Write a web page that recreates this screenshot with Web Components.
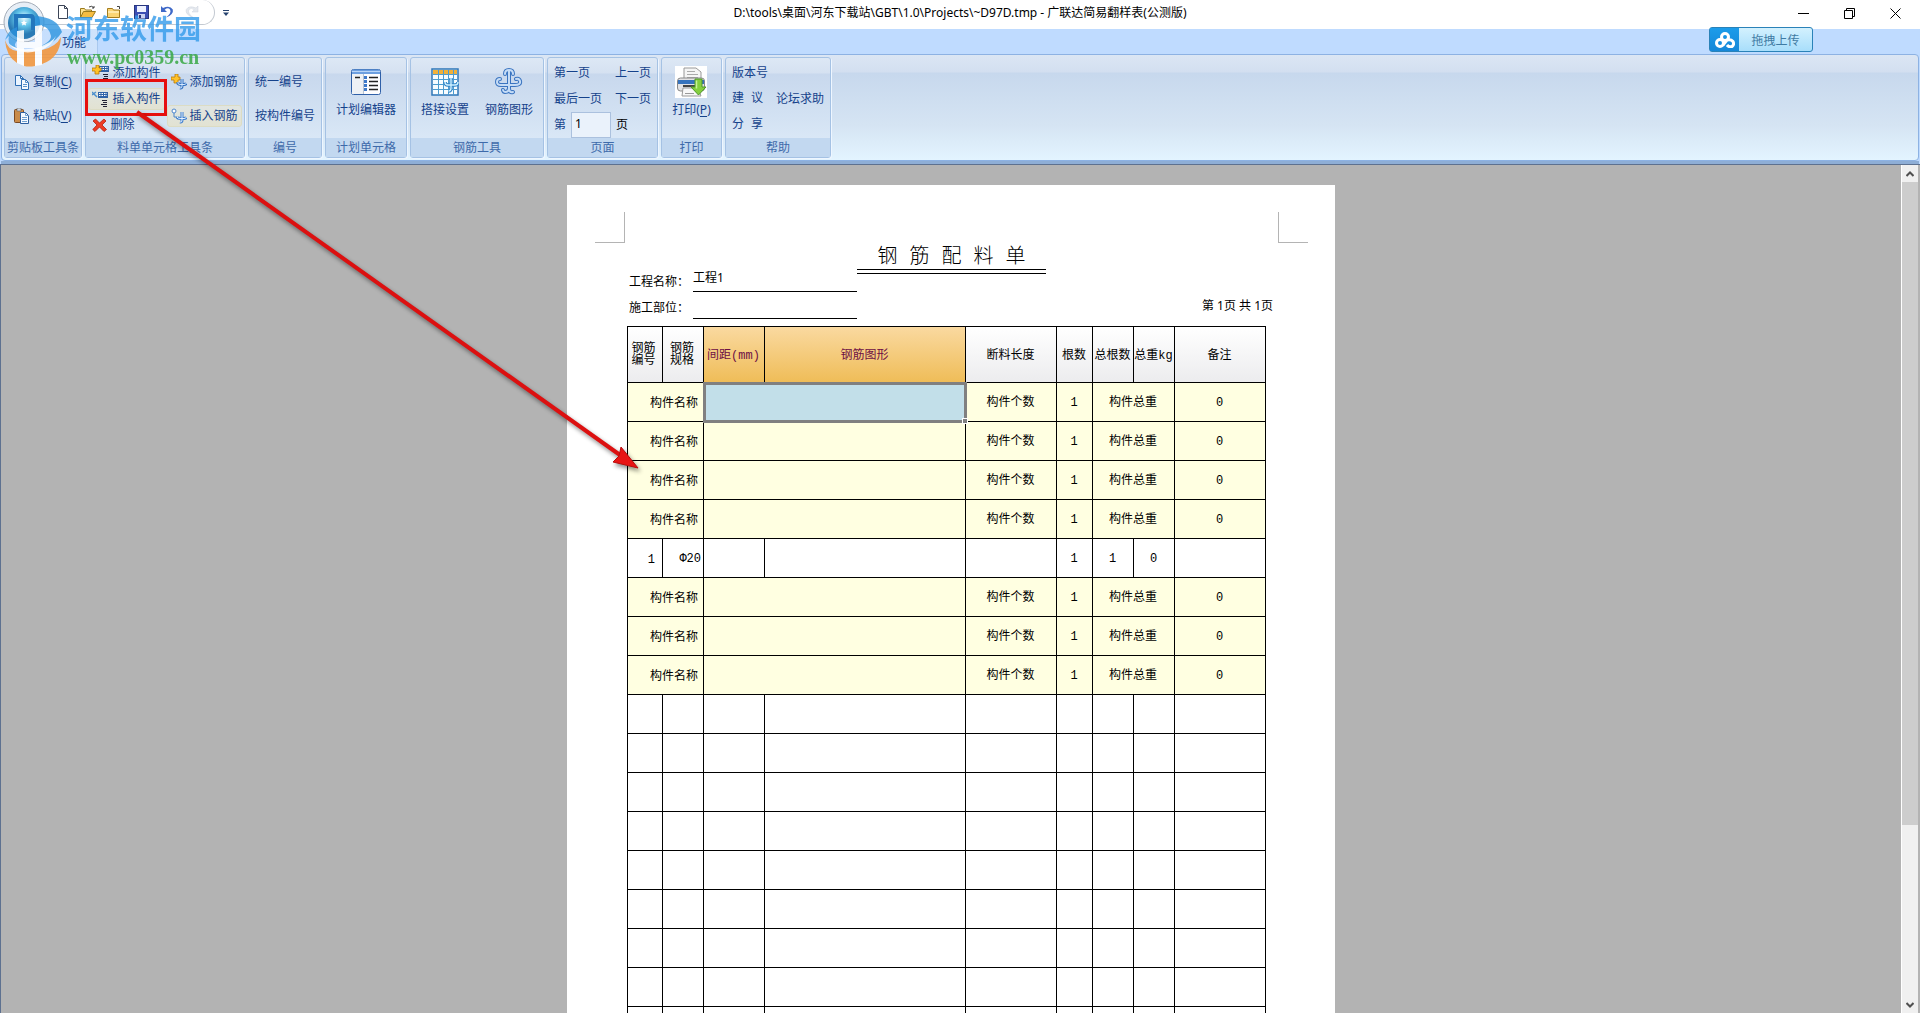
<!DOCTYPE html>
<html lang="zh-CN">
<head>
<meta charset="utf-8">
<title>广联达简易翻样表</title>
<style>
  html, body { height: 100%; }
  body { margin: 0; overflow: hidden; font-family: "Noto Sans", "Noto Sans CJK SC", sans-serif; font-size: 12px; }
</style>
</head>
<body>
<rebar-app></rebar-app>
<script>
const ICONS = {
  copy: [16, 16, '<path d="M1.5 1.500h5l3 3v7h-8z" fill="#eaf4ff" stroke="#2f6fb5"/><path d="M6.500 1.500v3h3" fill="none" stroke="#2f6fb5"/><path d="M7.500 5.500h4l3 3v7h-7z" fill="#f5faff" stroke="#2f6fb5"/><path d="M11.500 5.500v3h3M9 10.500h4M9 12.500h4" fill="none" stroke="#5b93cd"/>'],
  paste: [16, 16, '<rect x=".5" y="1.500" width="9" height="13" rx="1" fill="#c98b4a" stroke="#7b4a23"/><rect x="3" y="0" width="4" height="3" fill="#cfd6df" stroke="#666" stroke-width=".6"/><path d="M6.500 4.500h5l3 3v8h-8z" fill="#f5faff" stroke="#2f5f9f"/><path d="M11.500 4.500v3h3M8 9.500h5M8 11.500h5M8 13.500h5" fill="none" stroke="#6f9fd0"/>'],
  addPart: [17, 16, '<rect x="7" y="1" width="10" height="6" fill="#2f63a8"/><path d="M8 2.500h8M8 4.500h8" stroke="#fff" stroke-dasharray="1.500 1"/><path d="M11 9.500h5M12 11.500h4M11 13.500h5M13 15.500h3" stroke="#223"/><path d="M4 0h3v3h2v3H7v3H3V6H0V3h4z" fill="#ffc229" stroke="#b87a08" stroke-width=".8"/>'],
  insPart: [17, 16, '<rect x="6" y="1" width="10" height="6" fill="#2f63a8"/><path d="M7 2.500h8M7 4.500h8" stroke="#fff" stroke-dasharray="1.500 1"/><path d="M10 9.500h5M11 11.500h4M9 13.500h6M11 15.500h4" stroke="#223"/><path d="M0 1l5 5M0 4l4-3" stroke="#4b8fcd" stroke-width="1.500" fill="none"/>'],
  del: [15, 14, '<path d="M1 3l2.500-2L7.500 5 12 1l2 2-4 4 4.500 4.500-2.500 2L7.500 9 3 13.500.8 11.500 5 7z" fill="#ee3b24" stroke="#b3200f" stroke-width=".8"/>'],
  addBar: [16, 16, '<path d="M4 0h3v3h2v3H7v3H3V6H0V3h4z" fill="#ffc229" stroke="#b87a08" stroke-width=".8"/><path d="M11 5v7q0 2.500-2 2M7 8v1.500q.5 1 3 1h3q2 0 2.500-1.500" fill="none" stroke="#2f6fc0" stroke-width="3"/><path d="M11 5v7q0 2.500-2 2M7 8v1.500q.5 1 3 1h3q2 0 2.500-1.500" fill="none" stroke="#d5e9ff"/>'],
  insBar: [16, 16, '<circle cx="3" cy="3" r="2" fill="#fff" stroke="#4b86cc"/><path d="M3 5v4h3" fill="none" stroke="#4b86cc"/><path d="M11 4v8q0 2.500-2 2M6 9q.5 1.500 4 1.500h3q2 0 2.500-1.500" fill="none" stroke="#3f7fce" stroke-width="3"/><path d="M11 4v8q0 2.500-2 2M6 9q.5 1.500 4 1.500h3q2 0 2.500-1.500" fill="none" stroke="#e5f1ff"/>'],
  planner: [32, 28, '<rect x="1.500" y="1.500" width="29" height="25" rx="2" fill="#fdfdff" stroke="#2f60a8"/><path d="M2 3q0-1.500 1.500-1.500h25q1.500 0 1.500 1.500v3H2z" fill="#6d9fe0"/><path d="M2 3.500h28" stroke="#b9d5f7"/><rect x="2" y="6" width="11" height="20" fill="#eef1f5"/><path d="M13.500 6v20" stroke="#b6c2d2"/><path d="M5 9.500h5M19 9.500h9M19 13.500h9M19 17.500h9M19 21.500h9" stroke="#222" stroke-width="1.400"/><path d="M15.500 8v3M15.500 12v3M15.500 16v3M15.500 20v3" stroke="#3d78c9" stroke-width="3"/>'],
  lap: [28, 28, '<rect x="1" y="1" width="26" height="26" fill="#f7fcff" stroke="#2f77b8" stroke-width="1.500"/><rect x="2" y="2" width="24" height="4" fill="#f2b13a"/><path d="M2 6.500h24M2 11.500h24M2 16.500h24M2 21.500h24M7.500 2v25M12.500 2v25M17.500 2v25M22.500 2v25" stroke="#4d9ccf"/><path d="M20 10v10q0 3-2.500 3M14 14q0 3 3 3h7q3 0 3-3" fill="none" stroke="#2f83c8" stroke-width="3.500"/><path d="M20 10v10q0 3-2.500 3M14 14q0 3 3 3h7q3 0 3-3" fill="none" stroke="#cdf0ff" stroke-width="1.400"/>'],
  shape: [28, 28, '<g fill="none" stroke-linecap="round"><path d="M10 6q0-4 4-4t4 4M14 3v17q0 4-4 4-1.500 0-2-2M14 20q0 5 4 4M5 11q-3 0-3 3t4 3h14q6 0 5-4-1-3-4-2" stroke="#3a74c0" stroke-width="4"/><path d="M10 6q0-4 4-4t4 4M14 3v17q0 4-4 4-1.500 0-2-2M14 20q0 5 4 4M5 11q-3 0-3 3t4 3h14q6 0 5-4-1-3-4-2" stroke="#c5dcf6" stroke-width="2"/></g>'],
  print: [32, 32, '<rect width="32" height="32" fill="#fff"/><path d="M9 14V2h12l5 4v8z" fill="#f5f5f5" stroke="#999"/><path d="M12 5.500h8M12 8.500h11M12 11.500h11" stroke="#aaa"/><rect x="2.500" y="12" width="27" height="13" rx="3" fill="#e2e2e4" stroke="#888"/><rect x="3" y="14" width="26" height="4" fill="#3673bd"/><path d="M8 20h17" stroke="#444" stroke-width="2"/><path d="M8 22h15l3 8H7z" fill="#f8f8f8" stroke="#999"/><path d="M10 27.500h9" stroke="#999"/><path d="M20 13h7v8h4l-7.500 8-7.500-8h4z" fill="#84cf3e" stroke="#4f982a"/><path d="M21.500 14.500v8" stroke="#c8f09b" stroke-width="1.500"/>'],
  fresh: [14, 16, '<path d="M3.500 1.500h6l3 3v10h-9z" fill="#fff" stroke="#3c4557"/><path d="M9.500 1.500v3h3" fill="none" stroke="#3c4557"/>'],
  open: [16, 14, '<path d="M.5 12.500v-9h4l1 1.500h6v2" fill="#ffe38f" stroke="#9a7a1d"/><path d="M.5 12.500l3-6h12l-3.500 6z" fill="#f6bd42" stroke="#9a7a1d"/><path d="M9 2q3-2 5 1m0-2v2h-2" fill="none" stroke="#444"/>'],
  folder: [16, 14, '<path d="M.5 12.500v-9h5l1 1.500h6v7.500z" fill="#fbd575" stroke="#a47c1c"/><path d="M1 7h11" stroke="#ffe9a9" stroke-width="2"/><path d="M10 1.500h2.500V4" fill="none" stroke="#444"/>'],
  save: [15, 14, '<rect x=".5" y=".5" width="14" height="13" fill="#3c4fb4" stroke="#27357e"/><rect x="3" y="1" width="9" height="6" fill="#eef2ff"/><rect x="4" y="9" width="7" height="4.500" fill="#c9d2f0"/><rect x="5" y="10" width="2" height="3" fill="#27357e"/>'],
  undo: [14, 14, '<path d="M1 1v6h6L4.700 4.800Q8 2 10 4.500 12 8 6 12.500 14 9.500 12.800 4.500 10 0 3 3z" fill="#3f69c8"/>'],
  redo: [14, 14, '<path d="M13 1v6H7l2.300-2.200Q6 2 4 4.500 2 8 8 12.500 0 9.500 1.200 4.500 4 0 11 3z" fill="#e4e8ee" stroke="#cdd3dc" stroke-width=".5"/>'],
  more: [6, 6, '<path d="M0 .5h6" stroke="#26436f"/><path d="M0 2.500h6L3 6z" fill="#26436f"/>'],
  min: [11, 11, '<path d="M0 5.500h11" stroke="#000"/>'],
  restore: [11, 11, '<path d="M.5 2.500h8v8h-8zM2.500 2.500v-2h8v8h-2" fill="none" stroke="#000"/>'],
  close: [11, 11, '<path d="M.5.500l10 10M10.500.500l-10 10" stroke="#000"/>'],
  cloud: [20, 16, '<g fill="none" stroke="#fff" stroke-width="3"><circle cx="10" cy="5" r="3.500"/><circle cx="5" cy="11" r="3.500"/><path d="M12 8l-4 5M12 8q4-1 6 1.500 1.500 3-1 5-3 1-5-1.500"/></g>'],
  up: [8, 6, '<path d="M.5 5L4 1.500 7.500 5" fill="none" stroke="#505050" stroke-width="2"/>'],
  down: [8, 6, '<path d="M.5 1L4 4.500 7.500 1" fill="none" stroke="#505050" stroke-width="2"/>']
};

class Base extends HTMLElement {
  constructor() { super(); this.attachShadow({ mode: 'open' }); }
  render(css, html) { this.shadowRoot.innerHTML = `<style>${css}</style>${html}`; }
}

customElements.define('ui-icon', class extends Base {
  connectedCallback() {
    const [w, h, body] = ICONS[this.getAttribute('name')];
    this.render(':host{display:block;flex:none} svg{display:block}',
      `<svg width="${w}" height="${h}" viewBox="0 0 ${w} ${h}" aria-hidden="true">${body}</svg>`);
  }
});

customElements.define('tool-button', class extends Base {
  connectedCallback() {
    const icon = this.getAttribute('icon');
    this.render(`
      :host{display:block;white-space:nowrap}
      button{all:unset;box-sizing:border-box;display:flex;align-items:center;gap:3px;height:22px;font:inherit;line-height:16px;color:#15428b}
      :host([big]) button{flex-direction:column;height:70px;gap:4px;padding-top:2px}
      .pic{display:flex;align-items:center;justify-content:center}
      :host([big]) .pic{height:32px}
      :host([hot]) button{margin:0 -4px;padding:0 3px;border:1px solid #dcdcc4;border-radius:3px;background:linear-gradient(#e0e5e2,#e2e2d2)}
    `, `<button type="button">${icon ? `<span class="pic"><ui-icon name="${icon}"></ui-icon></span>` : ''}<span><slot></slot></span></button>`);
  }
});

customElements.define('ribbon-group', class extends Base {
  connectedCallback() {
    this.render(`
      :host{display:flex;flex-direction:column;box-sizing:border-box;height:101px;border:1px solid #a5c2e4;border-radius:3px;
        background:linear-gradient(#dde8f5 0,#d5e1f1 15px,#c8d8ed 16px,#d3e2f3 60px,#dfecf9 100%);box-shadow:1px 1px 0 #eef6ff}
      .tools{flex:1;display:flex;align-items:center;justify-content:center;gap:var(--gap,10px);padding-top:2px}
      .cap{height:19px;line-height:20px;text-align:center;color:#3e6aaa;background:#c2d8f0;white-space:nowrap}
    `, `<div class="tools"><slot></slot></div><div class="cap">${this.getAttribute('caption')}</div>`);
  }
});

customElements.define('tool-stack', class extends Base {
  connectedCallback() {
    this.render(':host{display:flex;flex-direction:column;gap:4px} :host([two]){gap:12px}', '<slot></slot>');
  }
});

customElements.define('title-bar', class extends Base {
  connectedCallback() {
    this.render(`
      :host{display:grid;grid-template-columns:1fr auto 1fr;align-items:center;height:29px;background:#fff;color:#000}
      .qat{display:flex;align-items:center;align-self:start;height:25px;gap:8px}
      .pill{box-sizing:border-box;display:flex;align-items:center;gap:11px;height:25px;width:215px;padding-left:55px;border:1px solid #c3c9d1;border-left:0;border-top:0;border-radius:0 13px 13px 0}
      .win{display:flex;justify-content:flex-end;gap:35px;padding-right:19px;padding-bottom:2px}
      button{all:unset;display:block}
      h1{margin:0;font:inherit;line-height:18px;padding-bottom:3px;white-space:nowrap}
    `, `
      <div class="qat"><div class="pill">
        ${[['fresh','新建'],['open','打开'],['folder','导入'],['save','保存'],['undo','撤销'],['redo','重做']].map(([i, l]) => `<button type="button" aria-label="${l}"><ui-icon name="${i}"></ui-icon></button>`).join('')}
      </div><button type="button" aria-label="自定义"><ui-icon name="more"></ui-icon></button></div>
      <h1>D:\\tools\\桌面\\河东下载站\\GBT\\1.0\\Projects\\~D97D.tmp - 广联达简易翻样表(公测版)</h1>
      <div class="win">
        <button type="button" aria-label="最小化"><ui-icon name="min"></ui-icon></button>
        <button type="button" aria-label="还原"><ui-icon name="restore"></ui-icon></button>
        <button type="button" aria-label="关闭"><ui-icon name="close"></ui-icon></button>
      </div>`);
  }
});

customElements.define('tab-strip', class extends Base {
  connectedCallback() {
    this.render(`
      :host{display:flex;justify-content:space-between;align-items:flex-start;height:25px;background:#bfdbff}
      .tab{all:unset;box-sizing:border-box;width:98px;height:25px;padding:0 0 0 62px;border-right:1px solid #a9c8ee;background:linear-gradient(90deg,#bfdbff,#cfe3fb);line-height:28px;color:#15428b;white-space:nowrap}
      .up{all:unset;box-sizing:border-box;display:flex;height:25px;margin-top:-2px;margin-right:107px;border:1px solid #2a82b8;border-radius:3px;background:linear-gradient(#d3f1fe,#a8defb);color:#3f7ba3;line-height:26px}
      .ico{display:flex;align-items:center;justify-content:center;width:29px;background:linear-gradient(#1c9cea,#1587d8)}
      .txt{width:73px;text-align:center}
    `, `<button type="button" class="tab">功能</button>
      <button type="button" class="up"><span class="ico"><ui-icon name="cloud"></ui-icon></span><span class="txt">拖拽上传</span></button>`);
  }
});

customElements.define('ribbon-bar', class extends Base {
  connectedCallback() {
    this.render(`
      :host{display:block;background:#bfdbff;padding:0 1px;border-bottom:1px solid #5d7190}
      .panel{box-sizing:border-box;display:flex;gap:3px;height:107px;padding:2px 2px 0;border:1px solid #8db2e3;border-radius:4px;
        background:linear-gradient(#dbe6f4 0,#d3dff0 17px,#c7d8ed 18px,#d5e4f3 70px,#e3f4ff 100%)}
      .foot{height:3px;background:#8eaed6}
      .free{font:12px "Liberation Mono","Noto Sans CJK SC",monospace}
      .page{display:flex;align-items:center;height:22px;gap:5px;color:#15428b;line-height:16px}
      .page input{all:unset;box-sizing:border-box;width:40px;height:26px;margin:-2px 0;padding:0 0 3px 3px;border:1px solid #abc1de;background:#eaf2fb;color:#000}
      .page span{color:#000}
      .pair{display:flex;gap:13px} u{text-underline-offset:2px}
    `, `
      <div class="panel">
        <ribbon-group caption="剪贴板工具条" style="width:78px">
          <tool-stack two><tool-button icon="copy">复制(<u>C</u>)</tool-button><tool-button icon="paste">粘贴(<u>V</u>)</tool-button></tool-stack>
        </ribbon-group>
        <ribbon-group caption="料单单元格工具条" style="width:160px">
          <tool-stack><tool-button icon="addPart">添加构件</tool-button><tool-button hot icon="insPart">插入构件</tool-button><tool-button icon="del">删除</tool-button></tool-stack>
          <tool-stack two><tool-button icon="addBar">添加钢筋</tool-button><tool-button hot icon="insBar">插入钢筋</tool-button></tool-stack>
        </ribbon-group>
        <ribbon-group caption="编号" style="width:74px">
          <tool-stack two><tool-button>统一编号</tool-button><tool-button>按构件编号</tool-button></tool-stack>
        </ribbon-group>
        <ribbon-group caption="计划单元格" style="width:82px"><tool-button big icon="planner">计划编辑器</tool-button></ribbon-group>
        <ribbon-group caption="钢筋工具" style="width:134px;--gap:16px">
          <tool-button big icon="lap">搭接设置</tool-button><tool-button big icon="shape">钢筋图形</tool-button>
        </ribbon-group>
        <ribbon-group caption="页面" style="width:111px">
          <tool-stack>
            <div class="pair"><tool-button style="width:48px">第一页</tool-button><tool-button>上一页</tool-button></div>
            <div class="pair"><tool-button style="width:48px">最后一页</tool-button><tool-button>下一页</tool-button></div>
            <label class="page">第<input type="text" value="1" aria-label="页码"><span>页</span></label>
          </tool-stack>
        </ribbon-group>
        <ribbon-group caption="打印" style="width:61px"><tool-button big icon="print">打印(<u>P</u>)</tool-button></ribbon-group>
        <ribbon-group caption="帮助" style="width:106px">
          <tool-stack>
            <tool-button>版本号</tool-button>
            <div class="pair"><tool-button class="free">建 议</tool-button><tool-button>论坛求助</tool-button></div>
            <tool-button class="free">分 享</tool-button>
          </tool-stack>
        </ribbon-group>
      </div>
      <div class="foot"></div>`);
  }
});

customElements.define('rebar-table', class extends Base {
  connectedCallback() {
    const part = sel => `<tr class="part"><td colspan="2" class="r">构件名称</td><td colspan="2"${sel ? ' class="sel"' : ''}></td><td>构件个数</td><td>1</td><td colspan="2">构件总重</td><td>0</td></tr>`;
    const row = c => `<tr>${c.map((t, i) => `<td${i < 2 ? ' class="r' + (i ? ' spec' : '') + '"' : ''}>${t}</td>`).join('')}</tr>`;
    const blank = row(Array(9).fill(''));
    this.render(`
      :host{display:block}
      table{table-layout:fixed;width:639px;border-spacing:0;border:solid #000;border-width:1px 0 0 1px;font:12px/16px "Liberation Mono","Noto Sans CJK SC",monospace;color:#000}
      th,td{box-sizing:border-box;padding:2px 1px 0 0;border:solid #000;border-width:0 1px 1px 0;text-align:center;font-weight:400}
      th{height:56px;background:linear-gradient(#fff,#ececee)}
      th.wrap{line-height:12px;padding:0 6px 0 4px}
      th.wrap:first-child{padding:0 6px 0 3px}
      th.on{background:linear-gradient(#fad9a0,#efbd58);color:#6d0f45}
      th.tight{white-space:nowrap}
      td{height:39px}
      .part td{background:#ffffe1}
      .part td.sel{background:#c2dfe9;position:relative;outline:3px solid #808080;outline-offset:-2px}
      .sel::after{content:"";position:absolute;right:-3px;bottom:-3px;width:4px;height:4px;background:#808080;border:1px solid #fff}
      td.r{text-align:right;padding:4px 5px 0 0}
      tr:not(.part) td.r{padding-right:7px}
      tr:not(.part) td.spec{padding:2px 2px 0 0}
    `, `<table>
      <colgroup>${[35, 41, 61, 201, 91, 36, 41, 41, 91].map(w => `<col style="width:${w}px">`).join('')}</colgroup>
      <thead><tr><th class="wrap">钢筋编号</th><th class="wrap">钢筋规格</th><th class="on">间距(mm)</th><th class="on">钢筋图形</th><th>断料长度</th><th>根数</th><th class="tight">总根数</th><th class="tight">总重kg</th><th>备注</th></tr></thead>
      <tbody>${part(true)}${part().repeat(3)}${row(['1', 'Φ20', '', '', '', '1', '1', '0', ''])}${part().repeat(3)}${blank.repeat(14)}</tbody>
    </table>`);
  }
});

customElements.define('paper-sheet', class extends Base {
  connectedCallback() {
    this.render(`
      :host{display:block;box-sizing:border-box;width:768px;background:#fff;padding:27px 27px 0 28px;color:#000;line-height:16px}
      .marks{display:flex;justify-content:space-between}
      .marks i{width:29px;height:30px;border:solid #b4b4b4;border-width:0 1px 1px 0}
      .marks i+i{border-width:0 0 1px 1px}
      h2{box-sizing:border-box;width:189px;height:31px;margin:0 auto;padding-top:3px;font:300 20px/24px "Liberation Mono","Noto Sans CJK SC",monospace;text-align:center;white-space:nowrap;
        border-bottom:1px solid #000}
      h2::after{content:"";display:block;border-bottom:1px solid #000;margin-top:-1px}
      .info{display:grid;grid-template:18px 27px / 63px 164px 1fr;margin:0 0 7px 34px}
      .line{border-bottom:1px solid #000;margin:0 -1px 0 1px}
      .label{white-space:nowrap}
      .low{padding-top:8px}
      .val{line-height:8px}
      .no{text-align:right;padding:6px 35px 0 0}
      rebar-table{margin-left:32px}
    `, `
      <div class="marks"><i></i><i></i></div>
      <h2>钢 筋 配 料 单</h2>
      <div class="info">
        <div class="label">工程名称：</div><div class="line val">工程1</div><div></div>
        <div class="label low">施工部位：</div><div class="line"></div><div class="no">第 1页 共 1页</div>
      </div>
      <rebar-table></rebar-table>`);
  }
});

customElements.define('scroll-bar', class extends Base {
  connectedCallback() {
    this.render(`
      :host{display:flex;flex-direction:column;width:16px;border-left:1px solid #fff;margin-right:2px;background:#f0f0f0}
      .b{all:unset;display:flex;align-items:center;justify-content:center;height:17px}
      .track{flex:1} .thumb{height:79%;background:#cdcdcd}
    `, `<button class="b" type="button" aria-label="向上"><ui-icon name="up"></ui-icon></button><div class="track"><div class="thumb"></div></div><button class="b" type="button" aria-label="向下"><ui-icon name="down"></ui-icon></button>`);
  }
});

customElements.define('site-watermark', class extends Base {
  connectedCallback() {
    this.render(`
      :host{position:absolute;left:0;top:0;display:flex;pointer-events:none}
      svg{display:block;flex:none}
      .t{padding-top:11px;white-space:nowrap}
      b{display:block;font:700 27px/34px "Noto Sans CJK SC",sans-serif;color:#339bea;opacity:.8}
      i{display:block;padding-left:1px;font:normal 700 20px/24px "Liberation Serif",serif;color:#39a845;opacity:.85}
    `, `<svg width="66" height="70" viewBox="0 0 66 70">
        <defs><radialGradient id="g" cx=".5" cy=".35"><stop offset="0" stop-color="#e9fbff"/><stop offset=".5" stop-color="#5fc2e8"/><stop offset="1" stop-color="#2a7bb5"/></radialGradient></defs>
        <circle cx="24" cy="22" r="20" fill="#e7eef6" stroke="#a3acb8"/>
        <circle cx="24" cy="23" r="16" fill="url(#g)"/>
        <path d="M14 14h17q4 0 4 5v11h-4V19q0-1-2-1H18v14h-4z" fill="#2276bd"/>
        <path d="M24 20l1 2h2l-1.500 1.500.5 2-2-1-2 1 .5-2L21 22h2z" fill="#fff"/>
        <path d="M35 26V16q22 1 27 16-10 15-27 16 16-5 16-12-2-9-9-10z" fill="#2c94df" opacity=".8"/>
        <path d="M5 40Q8 30 17 27v14q-4 4 0 7-7-1-8-5-1-4 0-7z" fill="#2c94df" opacity=".7"/>
        <path d="M5 40q3 10 12 11v12Q6 56 5 40zM24 51h11v15q-6 1-11 0zM42 50q14-3 19-13-1 21-19 27z" fill="#f2973e" opacity=".9"/>
        <path d="M17 31l7-1v36l-7-3zM35 26l7-1v40l-7 1zM24 42h11v6H24z" fill="#fff" opacity=".88"/>
        <path d="M8 43q12 10 30 4 14-4 18-11-4 11-18 15-20 5-30-8z" fill="#fff" opacity=".85"/>
      </svg>
      <div class="t"><b>河东软件园</b><i>www.pc0359.cn</i></div>`);
  }
});

customElements.define('callout-arrow', class extends Base {
  connectedCallback() {
    this.render(`
      :host{position:absolute;left:0;top:0;pointer-events:none}
      svg{display:block}
      g{filter:drop-shadow(2px 3px 2px rgba(0,0,0,.45))}
    `, `<svg width="660" height="490" viewBox="0 0 660 490">
        <rect x="86.500" y="80.500" width="79" height="34" fill="none" stroke="#e60f0f" stroke-width="3"/>
        <g><path d="M137 112L620 455" stroke="#dc1010" stroke-width="4"/>
        <path d="M638 468l-25-6 6-6 2-9z" fill="#e81414" stroke="#b80c0c"/></g>
      </svg>`);
  }
});

customElements.define('rebar-app', class extends Base {
  connectedCallback() {
    this.render(`
      :host{display:flex;flex-direction:column;height:100vh;position:relative;overflow:hidden}
      .work{box-sizing:border-box;flex:1;min-height:0;display:flex;border-left:1px solid #5d7190;background:#b3b3b3}
      .canvas{flex:1;display:flex;justify-content:center;align-items:flex-start;padding-top:20px;overflow:hidden}
      title-bar,tab-strip,ribbon-bar{flex:none}
    `, `
      <title-bar></title-bar>
      <tab-strip></tab-strip>
      <ribbon-bar></ribbon-bar>
      <div class="work"><div class="canvas"><paper-sheet></paper-sheet></div><scroll-bar></scroll-bar></div>
      <site-watermark></site-watermark>
      <callout-arrow></callout-arrow>`);
  }
});
</script>
</body>
</html>
